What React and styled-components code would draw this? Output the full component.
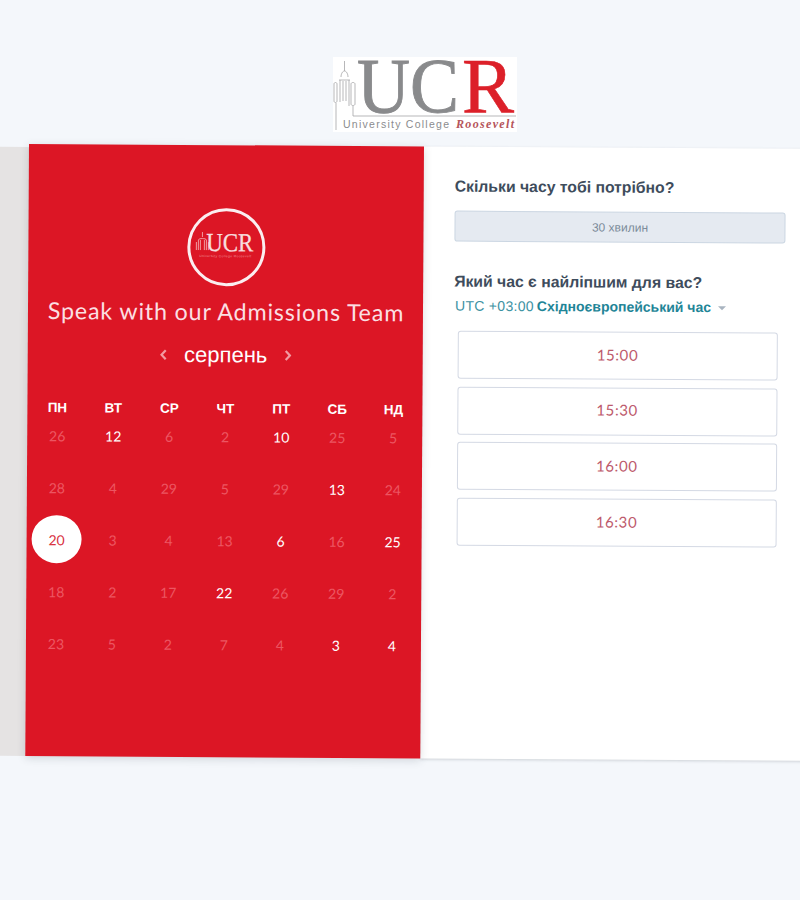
import React from "react";
import styled, { createGlobalStyle } from "styled-components";

const GlobalStyle = createGlobalStyle`
    html, body {
        margin: 0;
        padding: 0;
        background-color: #f4f7fb;
    }
`

const Page = styled.div`
    width: 800px;
    height: 900px;
    overflow: hidden;
    background-color: #f4f7fb;
    font-family: "Liberation Sans", Arial, sans-serif;
`

const LogoRow = styled.div`
    display: flex;
    justify-content: center;
    padding: 57px 0 12px 49px;
    height: 75px;
`

const LogoSvg = styled.svg`
    overflow: visible;
`

const Card = styled.div`
    display: flex;
    width: 1000px;
    height: 612px;
    margin-left: -20px;
    transform: rotate(0.35deg);
    transform-origin: 49px 0;
`

const GreyStrip = styled.div`
    flex: 0 0 49px;
    margin-top: 3px;
    background-color: #e5e3e3;
`

const CalendarPanel = styled.section`
    flex: 0 0 394px;
    box-sizing: border-box;
    padding: 63px 1px 0 2px;
    display: flex;
    flex-direction: column;
    align-items: center;
    background-color: #dc1625;
    color: #fff;
    box-shadow: 0 2px 8px rgba(50, 60, 70, 0.18);
    z-index: 1;
`

const Seal = styled.div`
    box-sizing: border-box;
    width: 78px;
    height: 78px;
    border: 3px solid #fbeef0;
    border-radius: 50%;
    display: flex;
    align-items: center;
    justify-content: center;
`

const Heading = styled.h1`
    margin: 9px 0 0;
    font-family: Lato, sans-serif;
    font-weight: 400;
    font-size: 23.3px;
    line-height: 32px;
    letter-spacing: 0.82px;
    white-space: nowrap;
    color: #fbdfe2;
`

const MonthNav = styled.div`
    display: flex;
    align-items: center;
    gap: 16px;
    margin-top: 13px;
    height: 30px;
`

const MonthName = styled.span`
    font-size: 22px;
    color: #fff;
`

const Calendar = styled.div`
    display: grid;
    grid-template-columns: repeat(7, 56px);
    margin-top: 26px;
`

const Weekday = styled.div`
    height: 24px;
    margin-bottom: -9px;
    display: flex;
    align-items: center;
    justify-content: center;
    font-size: 13.5px;
    font-weight: 700;
`

const DayCell = styled.div`
    height: 51.8px;
    display: flex;
    align-items: center;
    justify-content: center;
    font-family: Lato, sans-serif;
    font-size: 14px;
    font-weight: 400;
    color: ${(p) => (p.$open ? "#fff" : "#ec5662")};
`

const SelectedDay = styled.span`
    width: 50px;
    height: 48px;
    border-radius: 50%;
    background-color: #fff;
    color: #d9323f;
    display: flex;
    align-items: center;
    justify-content: center;
`

const TimePanel = styled.section`
    flex: 1;
    box-sizing: border-box;
    padding: 29px 0 0 31px;
    background-color: #fff;
    box-shadow: 0 1px 3px rgba(50, 60, 70, 0.2);
`

const Question = styled.h2`
    margin: 0;
    font-size: 15.75px;
    line-height: 22px;
    font-weight: 700;
    color: #3e4c5c;
`

const Duration = styled.div`
    box-sizing: border-box;
    width: 331px;
    height: 31px;
    margin: 13px 0 29px;
    display: flex;
    align-items: center;
    justify-content: center;
    background-color: #e5eaf1;
    border: 1px solid #cbd6e2;
    border-radius: 3px;
    font-size: 12px;
    color: #7b8a99;
`

const Timezone = styled.div`
    display: flex;
    align-items: center;
    gap: 3px;
    margin: 2px 0 0 1px;
    height: 22px;
    font-size: 14px;
    letter-spacing: 0.3px;
    color: #3d92a3;
`

const TimezoneName = styled.strong`
    color: #1f8597;
    font-weight: 700;
    letter-spacing: 0;
`

const Caret = styled.span`
    width: 0;
    height: 0;
    margin: 2px 0 0 4px;
    border-left: 4px solid transparent;
    border-right: 4px solid transparent;
    border-top: 4px solid #a9b4c0;
`

const Slots = styled.div`
    display: flex;
    flex-direction: column;
    gap: 7.7px;
    width: 319.5px;
    margin: 14px 0 0 4px;
`

const Slot = styled.button`
    box-sizing: border-box;
    height: 48px;
    padding: 0 0 3px;
    background-color: #fff;
    border: 1px solid #d4d9e4;
    border-radius: 3px;
    font-family: Lato, sans-serif;
    font-size: 15px;
    letter-spacing: 0.6px;
    color: #bd5a6c;
`

const UcrLogo = () => (
    <LogoSvg width="184" height="75" viewBox="0 0 184 75">
        <rect width="184" height="75" fill="#fff" />
        <g fill="none" stroke="#a4a5a7" strokeWidth="0.8">
            <path d="M11.5 4v10M8 20c0-3 1.5-6 3.5-6s3.5 3 3.5 6M6 23h11M7 23v22M16 23v26M10 24v20M13 24v20" />
            <path d="M1 27c0-2 3-2 3 0v17c0 2-3 2-3 0zM18 27c0-2 4-2 4 0v20c0 2-4 2-4 0z" />
            <path d="M3 46v27M20 49v10h163" />
        </g>
        <text x="24" y="54.5" fontFamily="Liberation Serif, serif" fontSize="78" fill="#898a8c" stroke="#898a8c" strokeWidth="0.9" textLength="102" lengthAdjust="spacingAndGlyphs">UC</text>
        <text x="129" y="54.5" fontFamily="Liberation Serif, serif" fontSize="78" fill="#dc2029" stroke="#dc2029" strokeWidth="0.6">R</text>
        <text x="10" y="71" fontFamily="Liberation Sans, sans-serif" fontSize="10.5" fill="#8b8c8e" textLength="106">University College</text>
        <text x="123" y="71" fontFamily="Liberation Serif, serif" fontSize="12" fontStyle="italic" fontWeight="700" fill="#b5545a" textLength="58">Roosevelt</text>
    </LogoSvg>
);

const SealMark = () => (
    <LogoSvg width="62" height="34" viewBox="0 0 62 34">
        <g fill="none" stroke="#f3a9ae" strokeWidth="0.9">
            <path d="M7 2v5M3 20V10c0-2 8-2 8 0v10M5 10v10M9 10v10M1 12v8M13 12v8" />
        </g>
        <text x="11" y="21" fontFamily="Liberation Serif, serif" fontSize="26" fill="#f8dcde" stroke="#f8dcde" strokeWidth="0.3" textLength="47" lengthAdjust="spacingAndGlyphs">UCR</text>
        <text x="4" y="27" fontFamily="Liberation Sans, sans-serif" fontSize="3.4" fill="#f08f96" textLength="52">University College Roosevelt</text>
    </LogoSvg>
);

const Chevron = ({ flip }) => (
    <svg width="8" height="12" viewBox="0 0 8 12" style={{ transform: flip ? "scaleX(-1)" : "none" }}>
        <path d="M6 1.5 1.8 6 6 10.5" fill="none" stroke="#f29aa1" strokeWidth="2.2" />
    </svg>
);

const weekdays = ["ПН", "ВТ", "СР", "ЧТ", "ПТ", "СБ", "НД"];

const days = [
    [26, 12, 6, 2, 10, 25, 5],
    [28, 4, 29, 5, 29, 13, 24],
    [20, 3, 4, 13, 6, 16, 25],
    [18, 2, 17, 22, 26, 29, 2],
    [23, 5, 2, 7, 4, 3, 4],
];

// клітинки з доступними датами, рядок-стовпець
const openDays = ["0-1", "0-4", "1-5", "2-4", "2-6", "3-3", "4-5", "4-6"];

const slots = ["15:00", "15:30", "16:00", "16:30"];

const App = () => {
    return (
        <Page>
            <GlobalStyle />
            <LogoRow>
                <UcrLogo />
            </LogoRow>
            <Card>
                <GreyStrip />
                <CalendarPanel>
                    <Seal>
                        <SealMark />
                    </Seal>
                    <Heading>Speak with our Admissions Team</Heading>
                    <MonthNav>
                        <Chevron />
                        <MonthName>серпень</MonthName>
                        <Chevron flip />
                    </MonthNav>
                    <Calendar>
                        {weekdays.map((day) => (
                            <Weekday key={day}>{day}</Weekday>
                        ))}
                        {days.map((row, r) =>
                            row.map((day, c) => (
                                <DayCell key={`${r}-${c}`} $open={openDays.includes(`${r}-${c}`)}>
                                    {r === 2 && c === 0 ? <SelectedDay>{day}</SelectedDay> : day}
                                </DayCell>
                            ))
                        )}
                    </Calendar>
                </CalendarPanel>
                <TimePanel>
                    <Question>Скільки часу тобі потрібно?</Question>
                    <Duration>30 хвилин</Duration>
                    <Question>Який час є найліпшим для вас?</Question>
                    <Timezone>
                        <span>UTC +03:00</span>
                        <TimezoneName>Східноєвропейський час</TimezoneName>
                        <Caret />
                    </Timezone>
                    <Slots>
                        {slots.map((slot) => (
                            <Slot key={slot}>{slot}</Slot>
                        ))}
                    </Slots>
                </TimePanel>
            </Card>
        </Page>
    );
};

export default App;
